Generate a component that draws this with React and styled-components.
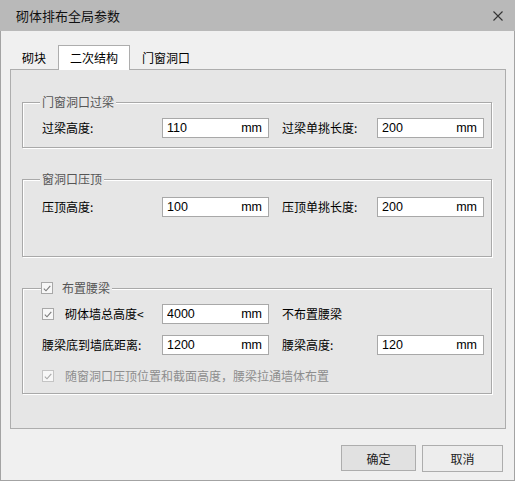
import React from 'react';
import styled, { createGlobalStyle } from 'styled-components';

const GlobalStyle = createGlobalStyle`
  html, body {
    margin: 0;
    padding: 0;
    background: #ffffff;
  }
  * {
    box-sizing: border-box;
  }
`;

const FONT = `"Noto Sans CJK SC", "Noto Sans", sans-serif`;

const Window = styled.div`
  width: 515px;
  height: 481px;
  display: flex;
  flex-direction: column;
  border: 1px solid #a3a3a3;
  border-top: none;
  background: #f0f0f0;
  font-family: ${FONT};
  font-size: 12px;
  color: #000;
`;

const TitleBar = styled.div`
  height: 31px;
  flex: none;
  margin: 0 -1px;
  display: flex;
  align-items: center;
  justify-content: space-between;
  padding: 0 12px 0 16px;
  background: #b9b9b9;
`;

const Title = styled.div`
  font-size: 13px;
  line-height: 18px;
  color: #111;
`;

const CloseButton = styled.div`
  width: 10px;
  height: 10px;
  display: flex;
`;

const Body = styled.div`
  flex: 1;
  display: flex;
  flex-direction: column;
  padding: 14px 8px 0 9px;
`;

const TabBar = styled.div`
  display: flex;
  height: 24px;
  position: relative;
  z-index: 1;
`;

const Tab = styled.div`
  height: ${(p) => (p.$active ? '25px' : '24px')};
  padding: 0 11px;
  display: flex;
  align-items: center;
  line-height: 16px;
  border: 1px solid ${(p) => (p.$active ? '#adadad' : 'transparent')};
  border-bottom: none;
  background: ${(p) => (p.$active ? '#ffffff' : 'transparent')};
`;

const Panel = styled.div`
  height: 360px;
  display: flex;
  flex-direction: column;
  gap: 31px;
  padding: 32px 13px 0 11px;
  border: 1px solid #adadad;
  background: #e6e6e6;
`;

const Group = styled.div`
  position: relative;
  display: flex;
  flex-direction: column;
  gap: 11px;
  padding: ${(p) => p.$pad};
  border: 1px solid #a9a9a9;
  box-shadow: 1px 1px 0 #ffffff, inset 1px 1px 0 #ffffff;
`;

const Legend = styled.div`
  position: absolute;
  top: -9px;
  left: ${(p) => (p.$check ? '18px' : '17px')};
  height: 16px;
  display: flex;
  align-items: center;
  gap: 9px;
  padding: ${(p) => (p.$check ? '0 2px 0 0' : '0 2px')};
  line-height: 16px;
  background: #e6e6e6;
  color: #555;
`;

const Row = styled.div`
  height: 20px;
  display: flex;
  align-items: center;
`;

const Label = styled.div`
  width: ${(p) => p.$w}px;
  flex: none;
  line-height: 16px;
  margin-left: ${(p) => p.$ml || 0}px;
  color: ${(p) => (p.$disabled ? '#8d8d8d' : '#000')};
`;

const CheckLabel = styled.div`
  width: ${(p) => p.$w || 120}px;
  flex: none;
  display: flex;
  align-items: center;
  gap: 11px;
  line-height: 16px;
  color: ${(p) => (p.$disabled ? '#8d8d8d' : '#000')};
`;

const Box = styled.span`
  width: 12px;
  height: 12px;
  flex: none;
  display: flex;
  align-items: center;
  justify-content: center;
  border: 1px solid ${(p) => (p.$disabled ? '#c4c4c4' : '#a8a8a8')};
  background: #f7f7f7;
`;

const Field = styled.div`
  width: 107px;
  height: 20px;
  flex: none;
  display: flex;
  align-items: center;
  padding: 0 6px 0 4px;
  border: 1px solid #a8a8a8;
  background: #ffffff;
  font-family: "Liberation Sans", "Noto Sans", sans-serif;
  font-size: 12.5px;
`;

const FieldInput = styled.input`
  flex: 1;
  min-width: 0;
  border: none;
  outline: none;
  padding: 0;
  background: transparent;
  font: inherit;
  color: #000;
`;

const Unit = styled.span`
  color: #000;
`;

const Footer = styled.div`
  display: flex;
  justify-content: flex-end;
  align-items: flex-start;
  gap: 6px;
  padding: 16px 3px 0 0;
`;

const Button = styled.button`
  width: ${(p) => (p.$primary ? '75px' : '81px')};
  height: ${(p) => (p.$primary ? '26px' : '27px')};
  border: 1px solid #adadad;
  background: ${(p) => (p.$primary ? '#e1e1e1' : '#ededed')};
  font-family: ${FONT};
  font-size: 12px;
  color: #222;
  padding: 0;
`;

const Check = ({ disabled }) => (
  <Box $disabled={disabled}>
    <svg width="8" height="7" viewBox="0 0 8 7">
      <path
        d="M0.8 3.6 L3 5.8 L7.3 0.8"
        fill="none"
        stroke={disabled ? '#a8a8a8' : '#7a7a7a'}
        strokeWidth="1.1"
      />
    </svg>
  </Box>
);

const NumField = ({ value }) => (
  <Field>
    <FieldInput defaultValue={value} />
    <Unit>mm</Unit>
  </Field>
);

const App = () => (
  <>
    <GlobalStyle />
    <Window>
      <TitleBar>
        <Title>砌体排布全局参数</Title>
        <CloseButton>
          <svg width="10" height="10" viewBox="0 0 10 10">
            <path d="M0.5 0.5 L9.5 9.5 M9.5 0.5 L0.5 9.5" stroke="#333" strokeWidth="1.1" />
          </svg>
        </CloseButton>
      </TitleBar>
      <Body>
        <TabBar>
          <Tab>砌块</Tab>
          <Tab $active>二次结构</Tab>
          <Tab>门窗洞口</Tab>
        </TabBar>
        <Panel>
          <Group $pad="15px 0 9px 19px">
            <Legend>门窗洞口过梁</Legend>
            <Row>
              <Label $w={120}>过梁高度:</Label>
              <NumField value="110" />
              <Label $w={95} $ml={13}>过梁单挑长度:</Label>
              <NumField value="200" />
            </Row>
          </Group>
          <Group $pad="17px 0 39px 19px">
            <Legend>窗洞口压顶</Legend>
            <Row>
              <Label $w={120}>压顶高度:</Label>
              <NumField value="100" />
              <Label $w={95} $ml={13}>压顶单挑长度:</Label>
              <NumField value="200" />
            </Row>
          </Group>
          <Group $pad="15px 0 7px 19px">
            <Legend $check>
              <Check />
              布置腰梁
            </Legend>
            <Row>
              <CheckLabel>
                <Check />
                砌体墙总高度&lt;
              </CheckLabel>
              <NumField value="4000" />
              <Label $w={95} $ml={13}>不布置腰梁</Label>
            </Row>
            <Row>
              <Label $w={120}>腰梁底到墙底距离:</Label>
              <NumField value="1200" />
              <Label $w={95} $ml={13}>腰梁高度:</Label>
              <NumField value="120" />
            </Row>
            <Row>
              <CheckLabel $w={420} $disabled>
                <Check disabled />
                随窗洞口压顶位置和截面高度，腰梁拉通墙体布置
              </CheckLabel>
            </Row>
          </Group>
        </Panel>
        <Footer>
          <Button $primary>确定</Button>
          <Button>取消</Button>
        </Footer>
      </Body>
    </Window>
  </>
);

export default App;
